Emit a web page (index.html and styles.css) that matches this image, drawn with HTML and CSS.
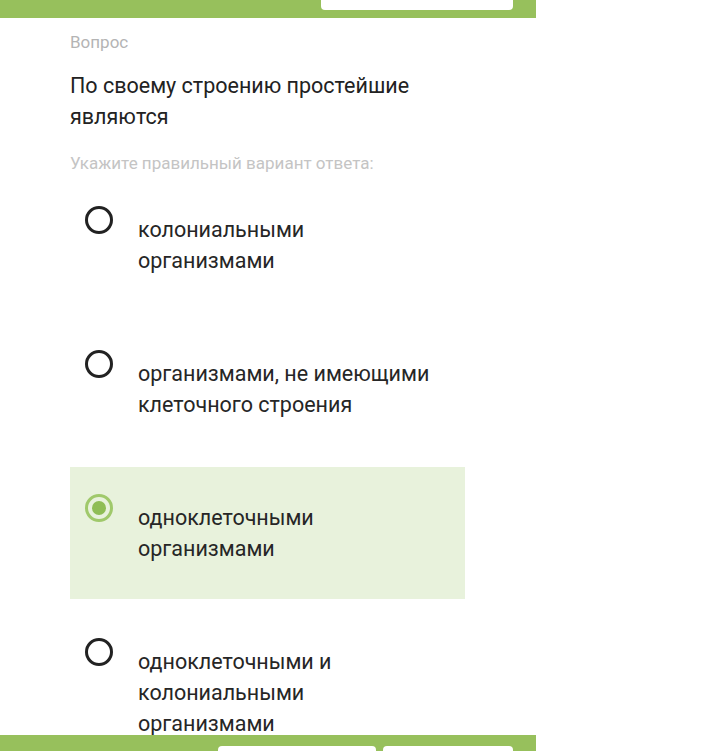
FILE: index.html
```html
<!DOCTYPE html>
<html lang="ru">
<head>
  <meta charset="UTF-8" />
  <meta name="viewport" content="width=device-width, initial-scale=1.0" />
  <title>Вопрос</title>
  <link rel="stylesheet" href="styles.css">
</head>
<body>
  <div class="screen">
    <header class="top-bar">
      <div class="top-field"></div>
    </header>

    <main class="question-body">
      <p class="caption">Вопрос</p>
      <p class="question">По своему строению простейшие являются</p>
      <p class="hint">Укажите правильный вариант ответа:</p>

      <div class="answers">
        <label class="answer">
          <span class="radio"></span>
          <span class="answer-text">колониальными организмами</span>
        </label>
        <label class="answer">
          <span class="radio"></span>
          <span class="answer-text">организмами, не имеющими клеточного строения</span>
        </label>
        <label class="answer selected">
          <span class="radio"></span>
          <span class="answer-text">одноклеточными организмами</span>
        </label>
        <label class="answer">
          <span class="radio"></span>
          <span class="answer-text">одноклеточными и колониальными организмами</span>
        </label>
      </div>
    </main>

    <footer class="bottom-bar">
      <div class="bottom-btn wide"></div>
      <div class="bottom-btn"></div>
    </footer>
  </div>
</body>
</html>
```

FILE: styles.css
```css
* {
  box-sizing: border-box;
}

body {
  margin: 0;
  padding: 0;
  background: #fff;
  font-family: Roboto, 'Noto Sans', sans-serif;
  color: #262626;
}

.screen {
  width: 536px;
  height: 751px;
  display: flex;
  flex-direction: column;
  overflow: hidden;
  background: #fff;
}

/* green bars */
.top-bar {
  height: 18px;
  flex-shrink: 0;
  background: #97c05c;
  display: flex;
  justify-content: flex-end;
  padding-right: 23px;
}

.top-field {
  width: 192px;
  height: 10px;
  background: #fff;
  border-radius: 0 0 4px 4px;
}

.bottom-bar {
  height: 16px;
  flex-shrink: 0;
  background: #97c05c;
  display: flex;
  justify-content: flex-end;
  gap: 7px;
  padding: 11px 23px 0 0;
}

.bottom-btn {
  width: 130px;
  background: #fff;
  border-radius: 4px 4px 0 0;
}

.bottom-btn.wide {
  width: 158px;
}

/* content */
.question-body {
  flex: 1;
  overflow: hidden;
  padding: 14px 0 0 70px;
}

.question-body p {
  margin: 0;
}

.caption {
  font-size: 17px;
  line-height: 20px;
  color: #b4b4b4;
}

.question {
  margin-top: 18px !important;
  width: 380px;
  font-size: 21.5px;
  line-height: 31px;
  color: #222;
}

.hint {
  margin-top: 21px !important;
  font-size: 17px;
  line-height: 20px;
  color: #c4c4c4;
}

.answers {
  margin-top: 6px;
  width: 395px;
  display: flex;
  flex-direction: column;
  gap: 12px;
}

.answer {
  display: flex;
  align-items: flex-start;
  gap: 25px;
  padding: 0 15px 35px 15px;
  min-height: 132px;
}

.answer.selected {
  background: #e8f2dc;
}

.radio {
  flex-shrink: 0;
  width: 28px;
  height: 28px;
  margin-top: 27px;
  border: 3px solid #222;
  border-radius: 50%;
}

.selected .radio {
  border-color: #a0c96b;
  display: flex;
  align-items: center;
  justify-content: center;
}

.selected .radio::after {
  content: "";
  width: 14px;
  height: 14px;
  border-radius: 50%;
  background: #8fbd55;
}

.answer-text {
  margin-top: 35px;
  width: 298px;
  font-size: 21.5px;
  line-height: 31px;
  color: #262626;
}
```
